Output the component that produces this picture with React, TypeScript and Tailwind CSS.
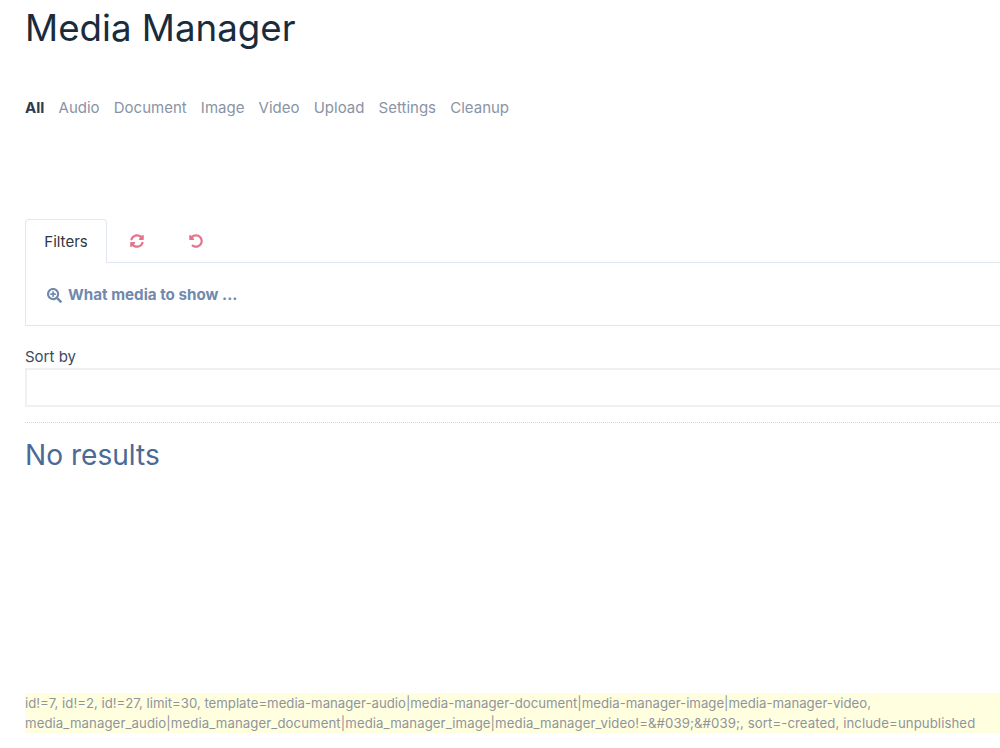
import { FaSearchPlus, FaSyncAlt, FaUndoAlt } from "react-icons/fa";

const tabs = ["Audio", "Document", "Image", "Video", "Upload", "Settings", "Cleanup"];

export default function App() {
	return (
		<div className="h-[748px] w-[1000px] overflow-hidden bg-white font-['Inter',sans-serif]">
			<div className="w-[1100px] pl-[25px]">
				<h1 className="pt-[6px] text-[36.7px] leading-[44px] text-[#1a2b3c]">Media Manager</h1>

				<nav className="mt-[46px] flex gap-[14.2px] text-[15px] leading-[24px] text-[#8a93a5]">
					<span className="font-bold text-[#2d3a4f]">All</span>
					{tabs.map((t) => (
						<span key={t}>{t}</span>
					))}
				</nav>

				<div className="mt-[99px] flex h-[43px] items-stretch">
					<div className="relative z-10 mb-[-1px] flex w-[82px] items-center justify-center rounded-t border border-b-0 border-[#e2e8f0] bg-white pt-px text-[15px] text-[#2f3640]">
						Filters
					</div>
					<div className="flex w-[59px] items-center justify-center">
						<FaSyncAlt className="size-[14px] text-[#e5738c]" />
					</div>
					<div className="flex w-[60px] items-center justify-center">
						<FaUndoAlt className="size-[14px] text-[#e5738c]" />
					</div>
				</div>
				<div className="flex h-[64px] items-center gap-[6px] border border-[#e2e8f0] pl-[21px] pt-[3px] text-[15.2px] font-bold text-[#7089ad]">
					<FaSearchPlus className="size-[15px]" />
					<span>What media to show ...</span>
				</div>

				<div className="mt-[21px] text-[15px] leading-[20px] text-[#3b4a5e]">Sort by</div>
				<div className="mt-[1px] h-[39px] border-2 border-[#f0f0f0] bg-white" />
				<div className="mt-[15px] border-t border-dotted border-[#d4d4d4]" />
				<div className="mt-[12px] text-[28.1px] leading-[40px] text-[#4b6a94]">No results</div>

				<div className="mt-[218px] h-[40px] w-[975px] bg-[#ffffe0] text-[13.2px] leading-[20px] text-[#8f949c]">
					id!=7, id!=2, id!=27, limit=30, template=media-manager-audio|media-manager-document|media-manager-image|media-manager-video,
					<br />
					<span className="tracking-[0.09px]">
						media_manager_audio|media_manager_document|media_manager_image|media_manager_video!=&amp;#039;&amp;#039;, sort=-created, include=unpublished
					</span>
				</div>
			</div>
		</div>
	);
}
